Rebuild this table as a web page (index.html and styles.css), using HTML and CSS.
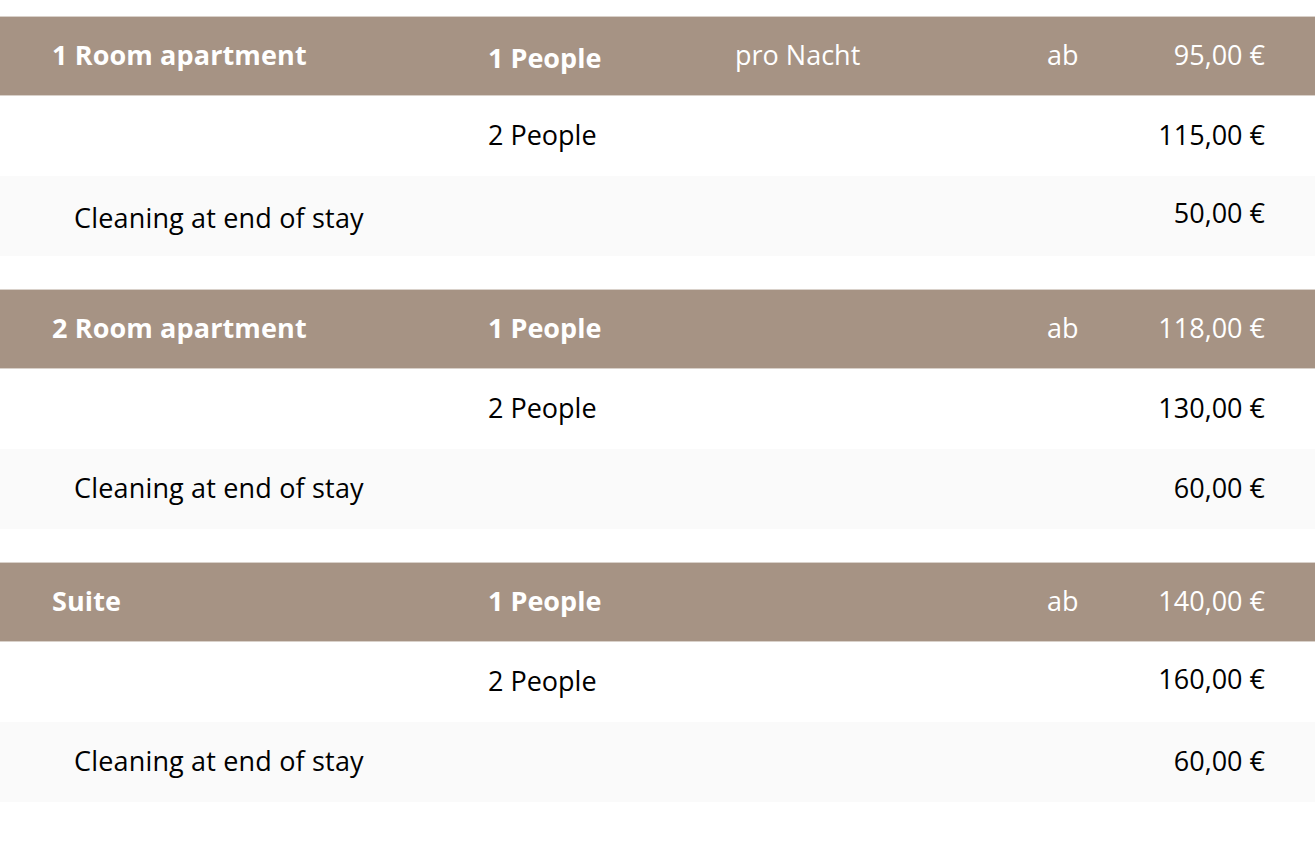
FILE: index.html
```html
<!DOCTYPE html>
<html lang="de">
<head>
<meta charset="utf-8">
<title>Preise</title>
<link rel="stylesheet" href="styles.css">
</head>
<body>
<main class="prices">
  <section class="price-table">
    <div class="row row--head">
      <div class="cell cell--title">1 Room apartment</div>
      <div class="cell cell--people cell--low">1 People</div>
      <div class="cell cell--unit">pro Nacht</div>
      <div class="cell cell--from">ab</div>
      <div class="cell cell--price">95,00 €</div>
    </div>
    <div class="row row--plain">
      <div class="cell cell--title"></div>
      <div class="cell cell--people">2 People</div>
      <div class="cell cell--unit"></div>
      <div class="cell cell--from"></div>
      <div class="cell cell--price">115,00 €</div>
    </div>
    <div class="row row--extra">
      <div class="cell cell--extra cell--low">Cleaning at end of stay</div>
      <div class="cell cell--price cell--high">50,00 €</div>
    </div>
  </section>

  <section class="price-table">
    <div class="row row--head">
      <div class="cell cell--title">2 Room apartment</div>
      <div class="cell cell--people">1 People</div>
      <div class="cell cell--unit"></div>
      <div class="cell cell--from">ab</div>
      <div class="cell cell--price">118,00 €</div>
    </div>
    <div class="row row--plain">
      <div class="cell cell--title"></div>
      <div class="cell cell--people">2 People</div>
      <div class="cell cell--unit"></div>
      <div class="cell cell--from"></div>
      <div class="cell cell--price">130,00 €</div>
    </div>
    <div class="row row--extra">
      <div class="cell cell--extra">Cleaning at end of stay</div>
      <div class="cell cell--price">60,00 €</div>
    </div>
  </section>

  <section class="price-table">
    <div class="row row--head">
      <div class="cell cell--title">Suite</div>
      <div class="cell cell--people">1 People</div>
      <div class="cell cell--unit"></div>
      <div class="cell cell--from">ab</div>
      <div class="cell cell--price">140,00 €</div>
    </div>
    <div class="row row--plain">
      <div class="cell cell--title"></div>
      <div class="cell cell--people">2 People</div>
      <div class="cell cell--unit"></div>
      <div class="cell cell--from"></div>
      <div class="cell cell--price cell--high">160,00 €</div>
    </div>
    <div class="row row--extra">
      <div class="cell cell--extra">Cleaning at end of stay</div>
      <div class="cell cell--price">60,00 €</div>
    </div>
  </section>
</main>
</body>
</html>
```

FILE: styles.css
```css
* {
  box-sizing: border-box;
}

html,
body {
  margin: 0;
  padding: 0;
  background: #ffffff;
}

body {
  font-family: "Open Sans", "Liberation Sans", sans-serif;
  font-size: 27px;
  color: #000000;
}

.prices {
  padding-top: 16px;
  display: flex;
  flex-direction: column;
  gap: 33px;
}

.price-table {
  display: flex;
  flex-direction: column;
}

.row {
  height: 80px;
  display: grid;
  grid-template-columns: 436px 247px 312px auto 1fr;
  align-items: center;
  padding: 0 50px 4px 52px;
  line-height: 1;
}

.row--head {
  background: #a69384;
  color: #ffffff;
  border-top: 1px solid #d9d1ca;
  border-bottom: 1px solid #d9d1ca;
}

.row--head .cell--title {
  letter-spacing: 0.12px;
}

.row--head .cell--title,
.row--head .cell--people {
  font-weight: 700;
}

.row--plain {
  background: #ffffff;
}

.row--extra {
  background: #fafafa;
  grid-template-columns: 1fr auto;
}

.cell--extra {
  padding-left: 22px;
  letter-spacing: 0.17px;
}

.cell--price {
  text-align: right;
}

.cell--low {
  position: relative;
  top: 3px;
}

.cell--high {
  position: relative;
  top: -2px;
}
```
